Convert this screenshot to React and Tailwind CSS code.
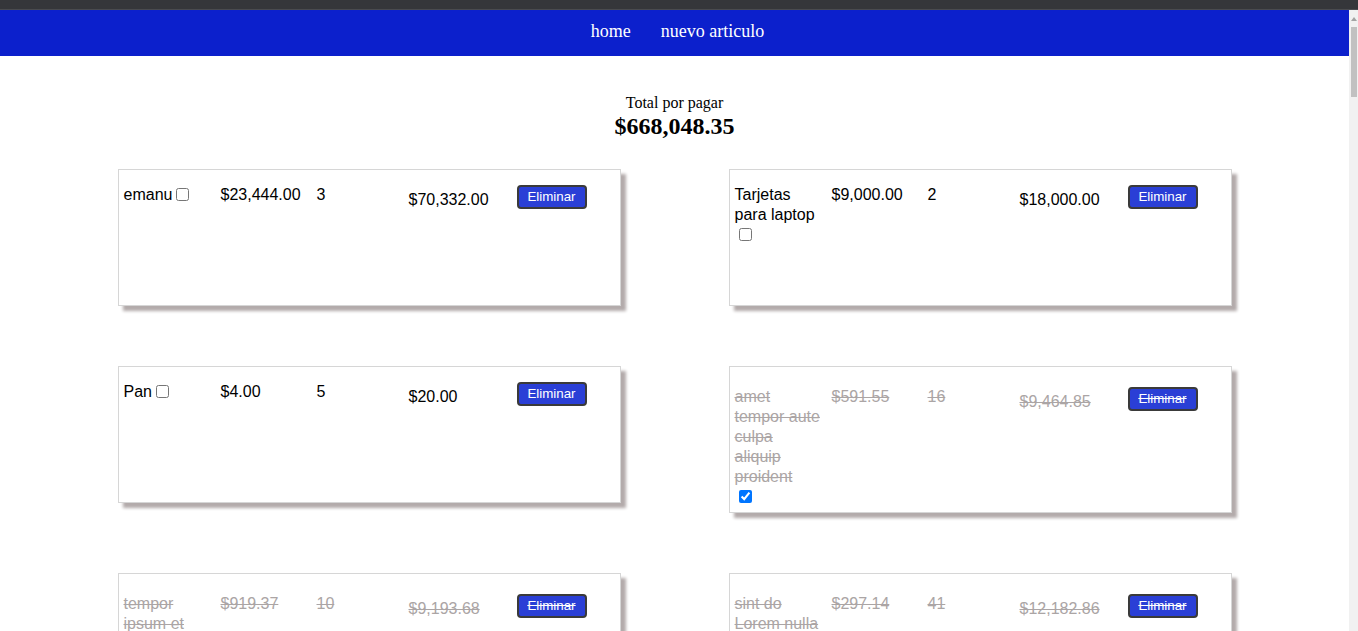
import React from 'react';

const items = [
  { id: 1, name: 'emanu', price: '$23,444.00', qty: 3, total: '$70,332.00', done: false },
  { id: 2, name: 'Tarjetas para laptop', price: '$9,000.00', qty: 2, total: '$18,000.00', done: false },
  { id: 3, name: 'Pan', price: '$4.00', qty: 5, total: '$20.00', done: false },
  { id: 4, name: 'amet tempor aute culpa aliquip proident', price: '$591.55', qty: 16, total: '$9,464.85', done: true },
  { id: 5, name: 'tempor ipsum et dolore minim', price: '$919.37', qty: 10, total: '$9,193.68', done: true },
  { id: 6, name: 'sint do Lorem nulla velit', price: '$297.14', qty: 41, total: '$12,182.86', done: true },
];

function ItemCard({ item }) {
  const strike = item.done ? 'line-through text-[#aba5a5]' : 'text-black';
  return (
    <div
      className={`w-[503px] min-h-[137px] bg-white border border-[#d6d6d6] shadow-[5px_5px_3px_#b3abab] pl-[5px] pb-[6px] flex items-start ${item.done ? 'pt-[20px]' : 'pt-[15px]'} ${strike}`}
    >
      <div className="w-[97px] pr-[9px] flex flex-wrap items-start">
        <p>{item.name}</p>
        <input
          type="checkbox"
          defaultChecked={item.done}
          className="w-[13px] h-[13px] mt-[3px] mr-[3px] mb-[3px] ml-[4px]"
        />
      </div>
      <p className="w-[96px]">{item.price}</p>
      <p className="w-[92px]">{item.qty}</p>
      <p className="w-[108px] mt-[5px]">{item.total}</p>
      <button
        className={`w-[70px] h-[24px] rounded-[4px] border-2 border-[#3a3a3a] bg-[#2a3fd6] text-white text-[13.33px] leading-[16px] ${item.done ? 'line-through' : ''}`}
      >
        Eliminar
      </button>
    </div>
  );
}

export default function App() {
  return (
    <div className="h-[631px] overflow-hidden flex flex-col bg-white">
      <div className="h-[10px] bg-[#35363a] border-b border-[#4a4b4f]" />
      <div className="flex-1 flex min-h-0">
        <div className="flex-1 min-w-0 font-['Liberation_Sans',Arial,sans-serif] text-[16px] leading-[20px]">
          <nav className="h-[46px] bg-[#0c20cc] flex items-center justify-center pb-[4px] pl-[6px] font-['Liberation_Serif','Times_New_Roman',serif] text-[18px] text-white">
            <a className="mx-[15px]">home</a>
            <a className="mx-[15px]">nuevo articulo</a>
          </nav>

          <div className="mt-[37px] text-center font-['Liberation_Serif','Times_New_Roman',serif] text-black">
            <p className="text-[16px] leading-[19px]">Total por pagar</p>
            <p className="text-[24px] leading-[28px] font-bold">$668,048.35</p>
          </div>

          <div className="mt-[29px] flex flex-wrap justify-center items-start gap-x-[108px] gap-y-[60px]">
            {items.map((item) => (
              <ItemCard key={item.id} item={item} />
            ))}
          </div>
        </div>

        {/* fake scrollbar */}
        <div className="w-[9px] bg-[#f1f1f1] flex flex-col items-center">
          <div className="h-[17px] flex items-center justify-center">
            <div className="w-0 h-0 border-l-[3px] border-r-[3px] border-b-[4px] border-l-transparent border-r-transparent border-b-[#a3a3a3]" />
          </div>
          <div className="w-[6px] h-[70px] bg-[#c1c1c1]" />
        </div>
      </div>
    </div>
  );
}
